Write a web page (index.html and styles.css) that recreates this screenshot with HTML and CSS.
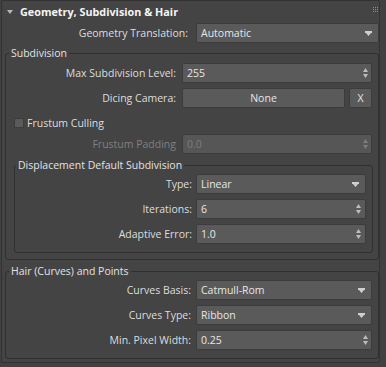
FILE: index.html
```html
<!DOCTYPE html>
<html lang="en">
<head>
  <meta charset="UTF-8" />
  <title>Geometry, Subdivision &amp; Hair</title>
  <link rel="stylesheet" href="styles.css">
</head>
<body>
  <div class="rollout">
    <div class="rollout-head">
      <svg class="caret" width="6" height="4" viewBox="0 0 6 4"><path d="M0 0H6L3 4Z"/></svg>
      <span class="rollout-title">Geometry, Subdivision &amp; Hair</span>
      <svg class="grip" width="5" height="5" viewBox="0 0 5 5">
        <rect x="0" y="0" width="1" height="1"/><rect x="2" y="0" width="1" height="1"/><rect x="4" y="0" width="1" height="1"/>
        <rect x="0" y="2" width="1" height="1"/><rect x="2" y="2" width="1" height="1"/><rect x="4" y="2" width="1" height="1"/>
        <rect x="0" y="4" width="1" height="1"/><rect x="2" y="4" width="1" height="1"/><rect x="4" y="4" width="1" height="1"/>
      </svg>
    </div>

    <div class="rollout-body">
      <div class="row top-row">
        <span class="label">Geometry Translation:</span>
        <div class="field dropdown">
          <span class="value">Automatic</span>
          <svg class="drop-arrow" width="7" height="5" viewBox="0 0 7 5"><path d="M0 0H7V2H6L3.5 5L1 2H0Z"/></svg>
        </div>
      </div>

      <fieldset class="group subdiv">
        <legend>Subdivision</legend>
        <div class="group-body">
          <div class="row">
            <span class="label">Max Subdivision Level:</span>
            <div class="field spinner">
              <span class="value">255</span>
              <svg class="spin-arrows" width="5" height="10" viewBox="0 0 5 10"><path d="M0 4L2.5 0L5 4Z M0 6L2.5 10L5 6Z"/></svg>
            </div>
          </div>
          <div class="row">
            <span class="label">Dicing Camera:</span>
            <div class="field button">None</div>
            <div class="field button small">X</div>
          </div>
          <div class="check-row">
            <span class="checkbox"></span>
            <span>Frustum Culling</span>
          </div>
          <div class="row disabled">
            <span class="label">Frustum Padding</span>
            <div class="field spinner">
              <span class="value">0.0</span>
              <svg class="spin-arrows" width="5" height="10" viewBox="0 0 5 10"><path d="M0 4L2.5 0L5 4Z M0 6L2.5 10L5 6Z"/></svg>
            </div>
          </div>

          <fieldset class="group displacement">
            <legend>Displacement Default Subdivision</legend>
            <div class="group-body">
              <div class="row">
                <span class="label">Type:</span>
                <div class="field dropdown">
                  <span class="value">Linear</span>
                  <svg class="drop-arrow" width="7" height="5" viewBox="0 0 7 5"><path d="M0 0H7V2H6L3.5 5L1 2H0Z"/></svg>
                </div>
              </div>
              <div class="row">
                <span class="label">Iterations:</span>
                <div class="field spinner">
                  <span class="value">6</span>
                  <svg class="spin-arrows" width="5" height="10" viewBox="0 0 5 10"><path d="M0 4L2.5 0L5 4Z M0 6L2.5 10L5 6Z"/></svg>
                </div>
              </div>
              <div class="row">
                <span class="label">Adaptive Error:</span>
                <div class="field spinner">
                  <span class="value">1.0</span>
                  <svg class="spin-arrows" width="5" height="10" viewBox="0 0 5 10"><path d="M0 4L2.5 0L5 4Z M0 6L2.5 10L5 6Z"/></svg>
                </div>
              </div>
            </div>
          </fieldset>
        </div>
      </fieldset>

      <fieldset class="group hair">
        <legend>Hair (Curves) and Points</legend>
        <div class="group-body">
          <div class="row">
            <span class="label">Curves Basis:</span>
            <div class="field dropdown">
              <span class="value">Catmull-Rom</span>
              <svg class="drop-arrow" width="7" height="5" viewBox="0 0 7 5"><path d="M0 0H7V2H6L3.5 5L1 2H0Z"/></svg>
            </div>
          </div>
          <div class="row">
            <span class="label">Curves Type:</span>
            <div class="field dropdown">
              <span class="value">Ribbon</span>
              <svg class="drop-arrow" width="7" height="5" viewBox="0 0 7 5"><path d="M0 0H7V2H6L3.5 5L1 2H0Z"/></svg>
            </div>
          </div>
          <div class="row">
            <span class="label">Min. Pixel Width:</span>
            <div class="field spinner">
              <span class="value">0.25</span>
              <svg class="spin-arrows" width="5" height="10" viewBox="0 0 5 10"><path d="M0 4L2.5 0L5 4Z M0 6L2.5 10L5 6Z"/></svg>
            </div>
          </div>
        </div>
      </fieldset>
    </div>
  </div>
</body>
</html>
```

FILE: styles.css
```css
* {
  box-sizing: border-box;
}

body {
  margin: 0;
  background: #414141;
  font-family: "Open Sans", "Noto Sans", sans-serif;
  font-size: 10.5px;
  color: #dedede;
}

.rollout {
  width: 379px;
  margin-left: 1px;
  background: #444444;
  border: 1px solid #323232;
  border-radius: 2px;
  padding-bottom: 3px;
}

.rollout-head {
  display: flex;
  align-items: center;
  height: 21px;
  padding-left: 5px;
}

.caret {
  fill: #b8b8b8;
  margin-right: 7px;
}

.rollout-title {
  flex: 1;
  font-weight: bold;
  font-size: 10.8px;
  color: #f4f4f4;
}

.grip {
  fill: #8c8c8c;
  align-self: flex-start;
  margin-top: 6px;
  margin-right: 1px;
}

.rollout-body {
  padding-top: 1px;
}

/* rows */
.row {
  display: flex;
  align-items: center;
  height: 20px;
  padding-right: 6px;
}

.label {
  flex: none;
  text-align: right;
  white-space: nowrap;
  padding-right: 6px;
}

.top-row {
  padding-right: 0;
}

.top-row .label {
  width: 194px;
  padding-right: 8px;
}

.subdiv .label {
  width: 176px;
}

.displacement .label {
  width: 181px;
  padding-right: 4px;
}

.hair .label {
  width: 190px;
  padding-right: 5px;
}

/* fields */
.field {
  flex: 1;
  display: flex;
  align-items: center;
  height: 20px;
  background: #5a5a5a;
  border: 1px solid #3c3c3c;
  border-radius: 2px;
  padding: 0 6px 0 4px;
  color: #e6e6e6;
}

.field .value {
  flex: 1;
}

.drop-arrow {
  fill: #cfcfcf;
}

.spinner {
  padding-right: 3px;
}

.displacement .spinner {
  padding-right: 4px;
}

.spin-arrows {
  fill: #bdbdbd;
}

.button {
  justify-content: center;
  padding: 0;
}

.button.small {
  flex: none;
  width: 23px;
  margin-left: 4px;
}

.disabled .label {
  color: #808080;
}

.disabled .field {
  background: #565656;
  color: #7c7c7c;
}

.disabled .spin-arrows {
  fill: #7e7e7e;
}

/* checkbox */
.check-row {
  display: flex;
  align-items: center;
  height: 16px;
  padding-top: 3px;
  padding-left: 8px;
}

.checkbox {
  width: 10px;
  height: 10px;
  background: #5a5a5a;
  border: 1px solid #3c3c3c;
  margin-right: 3px;
}

/* group boxes */
.group {
  margin: 0;
  padding: 0;
  border: 1px solid #303030;
  border-radius: 3px;
  min-inline-size: 0;
}

.group legend {
  line-height: 14px;
  padding: 0 2px;
  margin-left: 3px;
  color: #e2e2e2;
}

.group-body {
  display: flex;
  flex-direction: column;
  gap: 5px;
}

.subdiv {
  margin: 3px 0 0 3px;
  padding: 3px 0 6px 0;
}

.displacement {
  margin: -1px 5px 0 8px;
  padding: 2px 0 8px 0;
}

.displacement legend {
  margin-left: 1px;
}

.hair {
  margin: 4px 0 0 3px;
  padding: 2px 0 8px 0;
}
```
